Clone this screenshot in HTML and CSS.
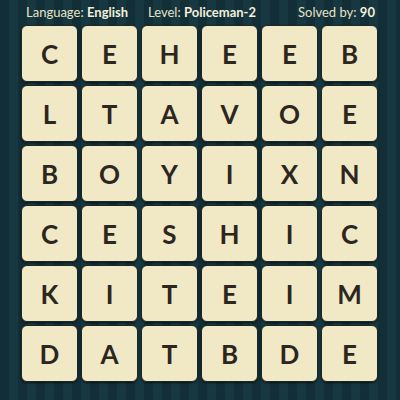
FILE: index.html
```
<!DOCTYPE html>
<html>
<head>
<meta charset="utf-8">
<link rel="stylesheet" href="styles.css">
</head>
<body>
<div class="page">
  <div class="header">
    <div class="info">Language: <b>English</b></div>
    <div class="info">Level: <b>Policeman-2</b></div>
    <div class="info">Solved by: <b>90</b></div>
  </div>
  <div class="grid">
    <div class="tile">C</div><div class="tile">E</div><div class="tile">H</div><div class="tile">E</div><div class="tile">E</div><div class="tile">B</div>
    <div class="tile">L</div><div class="tile">T</div><div class="tile">A</div><div class="tile">V</div><div class="tile">O</div><div class="tile">E</div>
    <div class="tile">B</div><div class="tile">O</div><div class="tile">Y</div><div class="tile">I</div><div class="tile">X</div><div class="tile">N</div>
    <div class="tile">C</div><div class="tile">E</div><div class="tile">S</div><div class="tile">H</div><div class="tile">I</div><div class="tile">C</div>
    <div class="tile">K</div><div class="tile">I</div><div class="tile">T</div><div class="tile">E</div><div class="tile">I</div><div class="tile">M</div>
    <div class="tile">D</div><div class="tile">A</div><div class="tile">T</div><div class="tile">B</div><div class="tile">D</div><div class="tile">E</div>
  </div>
</div>
</body>
</html>
```
FILE: styles.css
```
html, body {
  margin: 0;
  padding: 0;
}
body {
  width: 400px;
  height: 400px;
  overflow: hidden;
  background-color: #13303a;
  background-image: repeating-linear-gradient(90deg, #122e37 0px, #122e37 9px, #173840 9px, #173840 18px);
  font-family: Lato, "Open Sans", sans-serif;
}
.page {
  width: 400px;
  height: 400px;
}
.header {
  display: grid;
  grid-template-columns: 122px 150px auto;
  padding-left: 26px;
  height: 25px;
  align-items: center;
  color: #e6e2c6;
  font-size: 13px;
  line-height: 25px;
  box-sizing: border-box;
  padding-bottom: 2px;
}
.info b {
  font-weight: 700;
  color: #f3f0dc;
}
.grid {
  display: grid;
  grid-template-columns: repeat(6, 57px);
  grid-auto-rows: 57px;
  gap: 3px;
  padding-left: 21px;
}
.tile {
  box-sizing: border-box;
  background: #f1e9c5;
  border: 1px solid #1b2826;
  border-radius: 6px;
  box-shadow: 0 1px 2px rgba(0,0,0,0.6);
  display: flex;
  align-items: center;
  justify-content: center;
  color: #2c261f;
  font-weight: 700;
  font-size: 26px;
  padding-top: 1px;
}
```
